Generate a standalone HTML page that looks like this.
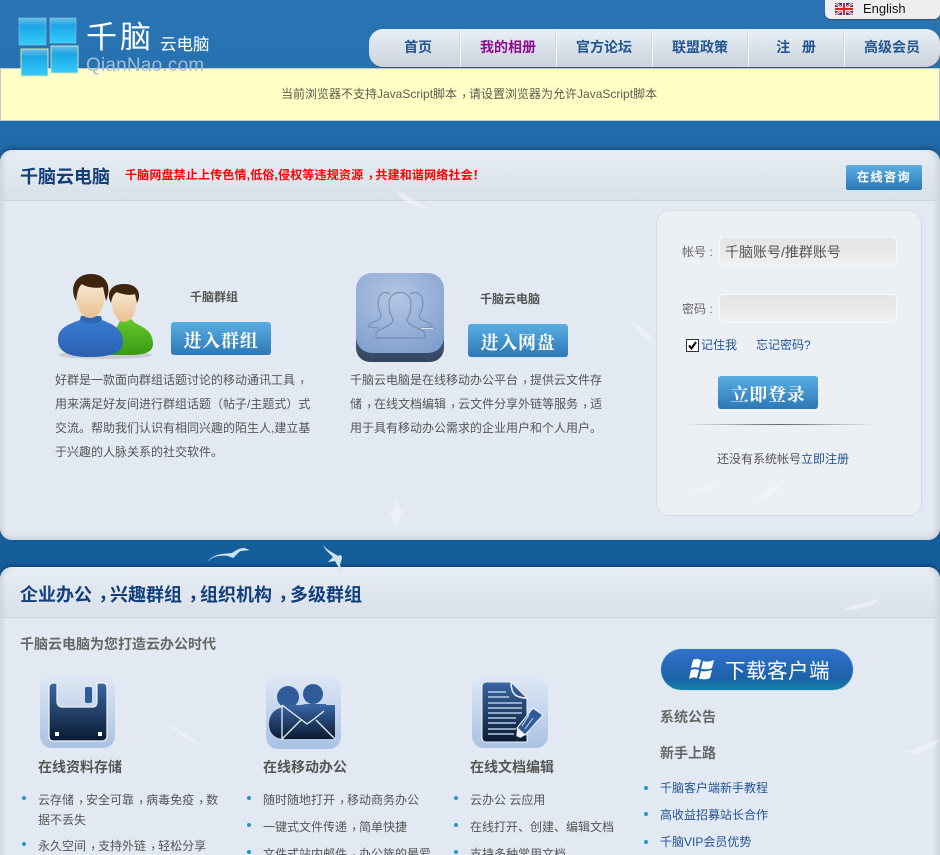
<!DOCTYPE html>
<html lang="zh"><head><meta charset="utf-8"><title>千脑云电脑</title>
<style>
html,body{margin:0;padding:0;width:940px;height:855px;overflow:hidden}
#w{position:relative;width:940px;height:855px;overflow:hidden;font-family:"Liberation Sans","WenQuanYi Zen Hei","Noto Sans CJK SC",sans-serif;font-size:12px;color:#555;
background:linear-gradient(#2a74b3 0,#2672b0 70px,#1f6bab 130px,#155e9c 560px)}
.t{position:absolute;white-space:nowrap}
.b{font-weight:bold}
.l{color:#1f5496}
.c{position:relative;left:.35em;top:-.05em}
.panel{position:absolute;left:0;width:940px;background:#e3e9f2;border-radius:12px;box-shadow:0 -2px 4px rgba(0,25,60,.4);overflow:hidden}
.panel:after{content:"";position:absolute;left:0;top:0;right:0;bottom:0;border-radius:12px;box-shadow:inset 5px 0 4px -2px #cdd5e0,inset -6px 0 5px -2px #cdd5e0,inset 0 -6px 5px -3px #cdd5e0,inset 0 1px 0 #f4f6f9}
.hd{position:absolute;left:0;top:0;width:100%;height:50px;background:linear-gradient(#e8edf4,#d9e0e9);border-bottom:1px solid #cdd4de;border-radius:12px 12px 0 0}
.btn{position:absolute;width:100px;height:33px;border-radius:3px;text-align:center;background:linear-gradient(#5aaee2,#2c78b6);color:#fff;font:bold 18px/38px "Liberation Serif","Noto Serif CJK SC",serif;letter-spacing:.7px}
.nav{position:absolute;top:29px;left:369px;width:571px;height:38px;border-radius:14px;background:linear-gradient(#eaeff6,#ccd3de);box-shadow:0 1px 0 #39557f}
.nav span{position:absolute;top:0;width:96px;line-height:36px;text-align:center;font-weight:bold;font-size:14px;color:#23568f}
.nav i{position:absolute;top:1px;width:1px;height:37px;background:#f3f5f8;box-shadow:-1px 0 0 #d0d6df}
.dot{position:absolute;width:4px;height:4px;border-radius:50%;background:#2a94c8}
.input{position:absolute;left:719px;width:176px;height:27px;border:1px solid #f7f8fa;border-radius:5px;background:linear-gradient(#e1e3e5,#eff0f2)}
</style></head><body><div id="w">

<!-- English -->
<div style="position:absolute;left:825px;top:0;width:115px;height:19px;background:#eeeeee;border-radius:0 0 6px 6px;box-shadow:0 1px 1px #3a4a66"></div>
<svg style="position:absolute;left:835px;top:3px" width="18" height="12" viewBox="0 0 18 12"><rect width="18" height="12" fill="#2b3f8c"/><path d="M0 0L18 12M18 0L0 12" stroke="#fff" stroke-width="2.4"/><path d="M0 0L18 12M18 0L0 12" stroke="#d22" stroke-width=".9"/><path d="M9 0V12M0 6H18" stroke="#fff" stroke-width="4"/><path d="M9 0V12M0 6H18" stroke="#d22" stroke-width="2.2"/></svg>
<div class="t" style="left:863px;top:1px;line-height:16px;font-size:13px;color:#111">English</div>

<!-- nav -->
<div class="nav">
<span style="left:1px">首页</span><i style="left:91px"></i>
<span style="left:91px;color:#8e0d8e">我的相册</span><i style="left:187px"></i>
<span style="left:187px">官方论坛</span><i style="left:283px"></i>
<span style="left:283px">联盟政策</span><i style="left:379px"></i>
<span style="left:379px">注&nbsp;&nbsp;&nbsp;册</span><i style="left:475px"></i>
<span style="left:475px">高级会员</span>
</div>

<!-- notice -->
<div style="position:absolute;left:0;top:68px;width:938px;height:51px;background:#ffffc6;border:1px solid #c4c8c8"></div>
<div class="t" style="left:281px;top:85px;line-height:18px;font-size:12px;color:#5c5c50">当前浏览器不支持JavaScript脚本<span class="c">，</span>请设置浏览器为允许JavaScript脚本</div>

<!-- logo -->
<svg style="position:absolute;left:15px;top:14px;z-index:3" width="70" height="66" viewBox="0 0 70 66">
<defs><linearGradient id="g" x1="0" y1="0" x2="0" y2="1"><stop offset="0" stop-color="#6cbde6"/><stop offset=".3" stop-color="#1ba6e6"/><stop offset="1" stop-color="#35ccfb"/></linearGradient></defs>
<rect x="4" y="4" width="27" height="27" fill="url(#g)" stroke="#7fc9e6" stroke-width=".6"/>
<rect x="35" y="4" width="26" height="25" fill="url(#g)" stroke="#7fc9e6" stroke-width=".6"/>
<rect x="6" y="35" width="27" height="27" fill="url(#g)" stroke="#d8e6b0" stroke-width="1"/>
<rect x="36" y="32" width="27" height="27" fill="url(#g)" stroke="#bfe3d0" stroke-width="1"/>
</svg>
<div class="t" style="left:86px;top:15px;font-size:31px;line-height:40px;color:#fff;letter-spacing:3px;font-family:'Noto Sans CJK SC',sans-serif;z-index:3">千脑</div>
<div class="t" style="left:160px;top:33px;font-size:16.5px;line-height:20px;color:#fff;font-family:'Noto Sans CJK SC',sans-serif;z-index:3">云电脑</div>
<div class="t" style="left:86px;top:54px;font-size:19px;line-height:24px;letter-spacing:.2px;color:#a4bdd8;z-index:3">QianNao.com</div>

<!-- panel 1 -->
<div class="panel" style="top:150px;height:390px"><div class="hd"></div></div>
<div class="t b" style="left:20px;top:164px;font-size:18px;line-height:26px;color:#123f7a">千脑云电脑</div>
<div class="t b" style="left:125px;top:166px;font-size:12px;line-height:18px;letter-spacing:.17px;color:#f00">千脑网盘禁止上传色情,低俗,侵权等违规资源<span class="c">，</span>共建和谐网络社会！</div>
<div style="position:absolute;left:846px;top:165px;width:76px;height:25px;border-radius:2px;background:linear-gradient(#5aaee2,#2c78b6);color:#fff;text-align:center;font:bold 12px/25px 'Liberation Sans','WenQuanYi Zen Hei',sans-serif;letter-spacing:1.5px">在线咨询</div>

<!-- people icon -->
<svg style="position:absolute;left:55px;top:272px" width="100" height="90" viewBox="0 0 100 90">
<defs><linearGradient id="sk" x1="0" y1="0" x2="0" y2="1"><stop offset="0" stop-color="#f8e6d0"/><stop offset="1" stop-color="#e8c090"/></linearGradient>
<linearGradient id="bl" x1="0" y1="0" x2="0" y2="1"><stop offset="0" stop-color="#3a7fd4"/><stop offset="1" stop-color="#2a5fb0"/></linearGradient>
<linearGradient id="gr" x1="0" y1="0" x2="0" y2="1"><stop offset="0" stop-color="#62c92a"/><stop offset="1" stop-color="#3a9a14"/></linearGradient></defs>
<ellipse cx="50" cy="83" rx="47" ry="4" fill="#c9ced4"/>
<path d="M58 60C62 55 64 52 64 50L68 47H76L80 51C90 56 98 60 98 72C98 80 90 83 75 83H55Z" fill="url(#gr)"/>
<path d="M56 24C56 42 63 50 69 50C76 50 82 42 82 24C82 18 56 18 56 24Z" fill="url(#sk)"/>
<path d="M56 31C51 22 55 12 69 12C83 12 87 22 82 31L80 22C74 24 66 22 62 20C58 22 57 26 56 31Z" fill="#3f2410"/>
<path d="M3 68C3 56 12 53 25 48L26 45C31 49 41 49 46 45L47 48C60 53 68 58 68 70C68 80 58 85 34 85C14 85 3 80 3 68Z" fill="url(#bl)"/>
<path d="M25 48C30 53 42 53 47 48L46 44H26Z" fill="#2d66b4"/>
<path d="M20 18C20 38 28 46 35 46C43 46 50 38 50 18C50 10 20 10 20 18Z" fill="url(#sk)"/>
<path d="M21 29C14 16 20 2 36 2C52 2 57 15 51 29L48 15C42 17 30 15 27 12C23 15 22 22 21 29Z" fill="#3f2410"/>
</svg>
<div class="t b" style="left:190px;top:288px;font-size:12px;line-height:18px;color:#555">千脑群组</div>
<div class="btn" style="left:171px;top:322px">进入群组</div>

<!-- app icon -->
<svg style="position:absolute;left:355px;top:273px" width="90" height="92" viewBox="0 0 90 92">
<defs><radialGradient id="ap" cx=".45" cy=".3" r=".8"><stop offset="0" stop-color="#b3c6e3"/><stop offset="1" stop-color="#7f9ecd"/></radialGradient><linearGradient id="ab" x1="0" y1="0" x2="0" y2="1"><stop offset="0" stop-color="#5f7fa8"/><stop offset="1" stop-color="#33455f"/></linearGradient></defs>
<rect x="1" y="12" width="88" height="77" rx="14" fill="url(#ab)"/>
<rect x="1" y="0" width="88" height="80" rx="16" fill="url(#ap)"/>
<g fill="none" stroke="#6f88ad" stroke-width="1">
<path d="M35 21C28 17 23 22 23 30C23 36 26 40 26 44C24 48 14 50 13 53C16 55 20 55 24 55"/>
<path d="M55 21C62 17 68 22 68 30C68 36 65 40 64 44C66 48 76 50 78 53C75 55 72 55 66 55"/>
<path d="M21 65V60C22 56 39 53 38 46C35 42 34 36 34 30C34 16 56 16 56 30C56 36 55 42 52 46C51 53 69 56 70 60V65Z"/>
</g>
<path d="M66 55.5H78" stroke="#d8e2f0" stroke-width="1"/>
</svg>
<div class="t b" style="left:480px;top:290px;font-size:12px;line-height:18px;color:#555">千脑云电脑</div>
<div class="btn" style="left:468px;top:324px">进入网盘</div>

<div class="t" style="left:55px;top:368px;line-height:24px;font-size:12px;color:#555">好群是一款面向群组话题讨论的移动通讯工具<span class="c">，</span><br>用来满足好友间进行群组话题（帖子/主题式）式<br>交流。帮助我们认识有相同兴趣的陌生人,建立基<br>于兴趣的人脉关系的社交软件。</div>
<div class="t" style="left:350px;top:368px;line-height:24px;font-size:12px;color:#555">千脑云电脑是在线移动办公平台<span class="c">，</span>提供云文件存<br>储<span class="c">，</span>在线文档编辑<span class="c">，</span>云文件分享外链等服务<span class="c">，</span>适<br>用于具有移动办公需求的企业用户和个人用户。</div>

<!-- login -->
<div style="position:absolute;left:656px;top:210px;width:264px;height:304px;border:1px solid #d6dbe3;border-radius:14px;background:#ecf0f5"></div>
<div class="t" style="left:682px;top:243px;line-height:18px;color:#666">帐号 :</div>
<div class="input" style="top:237px"></div>
<div class="t" style="left:725px;top:241px;font-size:14px;line-height:22px;color:#555">千脑账号/推群账号</div>
<div class="t" style="left:682px;top:300px;line-height:18px;color:#666">密码 :</div>
<div class="input" style="top:294px"></div>
<svg style="position:absolute;left:686px;top:339px" width="13" height="13" viewBox="0 0 13 13"><rect x=".5" y=".5" width="12" height="12" fill="#fff" stroke="#333"/><path d="M3 6.5L5.5 9.5L10 3" fill="none" stroke="#000" stroke-width="2"/></svg>
<div class="t l" style="left:701px;top:336px;line-height:18px">记住我</div>
<div class="t l" style="left:756px;top:336px;line-height:18px">忘记密码?</div>
<div class="btn" style="left:718px;top:376px">立即登录</div>
<div style="position:absolute;left:682px;top:424px;width:196px;height:1px;background:linear-gradient(90deg,#ecf0f5,#666 50%,#ecf0f5)"></div>
<div class="t" style="left:717px;top:450px;line-height:18px;color:#555">还没有系统帐号<span class="l">立即注册</span></div>

<!-- panel 2 -->
<div class="panel" style="top:567px;height:300px"><div class="hd"></div></div>

<!-- birds -->
<svg style="position:absolute;left:0;top:0" width="940" height="855" viewBox="0 0 940 855">
<g fill="#f2f5f9" opacity=".65">
<path d="M395 190C405 193 412 199 420 204L430 209C420 208 412 205 408 203C403 199 398 195 395 190Z"/>
<path d="M395 497C399 505 398 510 404 512L400 516L397 527C394 520 392 517 390 514C394 510 396 505 395 497Z"/>
<path d="M632 322C640 326 646 330 650 335L655 345C648 340 642 336 638 332C636 328 634 325 632 322Z"/>
<path d="M688 495C695 489 705 489 720 480C715 487 705 493 695 493Z"/>
<path d="M755 503C758 494 768 490 785 478C778 490 770 497 762 500Z"/>
<path d="M166 725C175 728 190 735 200 745C190 741 185 737 182 737L180 733C175 730 170 728 166 725Z"/>
<path d="M842 610C850 605 865 604 880 598C875 606 860 610 842 610Z"/>
<path d="M886 749C895 750 905 752 912 750C920 745 930 745 940 738C935 748 925 752 915 755C905 750 895 751 886 749Z"/>
</g>
<g fill="#cfe3f2">
<path d="M207 562C214 553 224 554 232 553C236 550 240 548 244 548L250 550L241 551C237 553 236 556 233 558L228 556C221 555 213 556 207 562Z"/>
<path d="M323 545C328 551 334 553 338 556C341 554 342 556 342 558L340 565L343 573C339 568 336 563 335 561L328 562L333 557C329 553 325 550 323 545Z"/>
</g>
</svg>

<div class="t b" style="left:20px;top:581px;font-size:18px;line-height:28px;color:#123f7a">企业办公<span class="c">，</span>兴趣群组<span class="c">，</span>组织机构<span class="c">，</span>多级群组</div>
<div class="t b" style="left:20px;top:635px;font-size:14px;line-height:18px;color:#666">千脑云电脑为您打造云办公时代</div>

<!-- feature icons -->
<svg style="position:absolute;left:40px;top:675px" width="75" height="73" viewBox="0 0 75 73">
<defs><linearGradient id="tile" x1="0" y1="0" x2="0" y2="1"><stop offset="0" stop-color="#dfe8f5"/><stop offset="1" stop-color="#a9c1e3"/></linearGradient><linearGradient id="nv" x1="0" y1="0" x2="0" y2="1"><stop offset="0" stop-color="#3a66a4"/><stop offset="1" stop-color="#0b1a30"/></linearGradient></defs>
<rect width="75" height="73" rx="12" fill="url(#tile)"/>
<path d="M13 8H17V26C17 30 19 32 22 32H53C56 32 57 30 57 26V8H63C66 8 67 10 67 13V61C67 64 65 66 62 66H13C10 66 9 64 9 61V12C9 10 11 8 13 8Z" fill="url(#nv)" stroke="#f2f5fa" stroke-width="1.2"/>
<rect x="45" y="12" width="7" height="16" rx="2" fill="#2f5c98"/>
<rect x="15" y="57" width="4" height="4" fill="#fff"/><rect x="58" y="57" width="4" height="4" fill="#fff"/>
</svg>
<svg style="position:absolute;left:266px;top:674px" width="75" height="75" viewBox="0 0 75 75">
<rect width="75" height="75" rx="12" fill="url(#tile)"/>
<circle cx="22" cy="23" r="11" fill="#2f5c98"/><circle cx="47" cy="20" r="10" fill="#2f5c98"/>
<path d="M3 50C3 38 12 32 24 33L40 30H60L60 65H22C10 66 3 60 3 50Z" fill="url(#nv)"/>
<path d="M16 31H69V65H16Z" fill="url(#nv)"/>
<path d="M16 31V65L35 46M16 31L41 50L48 45L58 37M69 65L50 46" fill="none" stroke="#e8eef7" stroke-width="1.3"/>
</svg>
<svg style="position:absolute;left:472px;top:676px" width="76" height="72" viewBox="0 0 76 72">
<rect width="76" height="72" rx="12" fill="url(#tile)"/>
<path d="M14 6H39L55 22V66H14C11 66 10 64 10 61V10C10 8 12 6 14 6Z" fill="url(#nv)" stroke="#eef2f8" stroke-width="1"/>
<path d="M39 6C39 16 42 22 55 22" fill="none" stroke="#eef2f8" stroke-width="1.5"/>
<path d="M16 16H34M16 21H37M16 27H50M16 32H50M16 37H50M16 42H44M16 47H44M16 53H44M16 58H42" stroke="#b6cbe6" stroke-width="1.5"/>
<path d="M61 32L71 39L53 59L45 52Z" fill="#2f5c98" stroke="#eef2f8" stroke-width="1.2"/>
<path d="M45 52L44 65L53 59Z" fill="#eef2f8"/><path d="M44 65V60L49 62Z" fill="#12243f"/>
<path d="M57 39L50 50M61 42L53 53M65 45L57 55" stroke="#c7d6ea" stroke-width="1"/>
</svg>

<div class="t b" style="left:38px;top:758px;font-size:14px;line-height:18px;color:#555">在线资料存储</div>
<div class="t b" style="left:263px;top:758px;font-size:14px;line-height:18px;color:#555">在线移动办公</div>
<div class="t b" style="left:470px;top:758px;font-size:14px;line-height:18px;color:#555">在线文档编辑</div>

<i class="dot" style="left:22px;top:796px"></i>
<div class="t" style="left:38px;top:790px;line-height:20px;color:#555">云存储<span class="c">，</span>安全可靠<span class="c">，</span>病毒免疫<span class="c">，</span>数<br>据不丢失</div>
<i class="dot" style="left:22px;top:842px"></i>
<div class="t" style="left:38px;top:836px;line-height:20px;color:#555">永久空间<span class="c">，</span>支持外链<span class="c">，</span>轻松分享</div>

<i class="dot" style="left:247px;top:796px"></i>
<div class="t" style="left:263px;top:790px;line-height:20px;color:#555">随时随地打开<span class="c">，</span>移动商务办公</div>
<i class="dot" style="left:247px;top:823px"></i>
<div class="t" style="left:263px;top:817px;line-height:20px;color:#555">一键式文件传递<span class="c">，</span>简单快捷</div>
<i class="dot" style="left:247px;top:850px"></i>
<div class="t" style="left:263px;top:844px;line-height:20px;color:#555">文件式站内邮件<span class="c">，</span>办公族的最爱</div>

<i class="dot" style="left:454px;top:796px"></i>
<div class="t" style="left:470px;top:790px;line-height:20px;color:#555">云办公 云应用</div>
<i class="dot" style="left:454px;top:823px"></i>
<div class="t" style="left:470px;top:817px;line-height:20px;color:#555">在线打开、创建、编辑文档</div>
<i class="dot" style="left:454px;top:850px"></i>
<div class="t" style="left:470px;top:844px;line-height:20px;color:#555">支持多种常用文档</div>

<!-- download -->
<div style="position:absolute;left:661px;top:649px;width:192px;height:41px;border-radius:21px;background:linear-gradient(#3272cc,#1c62a8 70%,#1480a8);box-shadow:0 0 0 1px #c8e6e6"></div>
<svg style="position:absolute;left:688px;top:657px" width="28" height="26" viewBox="0 0 28 26" fill="#fff"><path d="M5 3C8 1 10 2 13 3L11 11C8 10 6 10 3 11Z"/><path d="M15 4C18 5 21 5 26 3L24 11C20 13 17 12 13 12Z"/><path d="M3 13C6 12 8 12 11 13L9 21C6 20 4 20 1 22Z"/><path d="M13 14C17 15 20 14 24 13L22 21C18 23 15 22 11 22Z"/></svg>
<div class="t" style="left:725px;top:655px;font-size:20.5px;line-height:28px;color:#fff;letter-spacing:.5px;font-family:'Noto Sans CJK SC',sans-serif">下载客户端</div>

<div class="t b" style="left:660px;top:708px;font-size:14px;line-height:18px;color:#666">系统公告</div>
<div class="t b" style="left:660px;top:744px;font-size:14px;line-height:18px;color:#666">新手上路</div>
<i class="dot" style="left:644px;top:786px"></i>
<div class="t l" style="left:660px;top:779px;line-height:19px">千脑客户端新手教程</div>
<i class="dot" style="left:644px;top:812px"></i>
<div class="t l" style="left:660px;top:806px;line-height:19px">高收益招募站长合作</div>
<i class="dot" style="left:644px;top:840px"></i>
<div class="t l" style="left:660px;top:833px;line-height:19px">千脑VIP会员优势</div>
</div></body></html>
